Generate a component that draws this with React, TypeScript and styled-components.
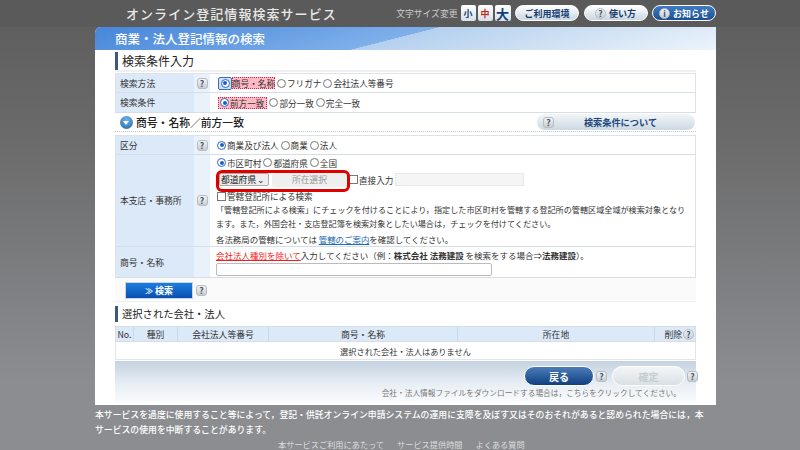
import React from "react";
import styled, { createGlobalStyle } from "styled-components";

const Global = createGlobalStyle`
  html, body { margin: 0; padding: 0; width: 800px; height: 450px; overflow: hidden; }
  body {
    background: linear-gradient(180deg, #5c5c5c 0%, #6a6a6a 30%, #8b8d91 85%, #8b8d91 100%);
    font-family: "Noto Sans CJK JP", "Liberation Sans", sans-serif;
    font-size: 9px;
    color: #333;
  }
  * { box-sizing: border-box; }
`;

const Page = styled.div`
  width: 800px; height: 450px; overflow: hidden; display: flex; flex-direction: column;
`;
const Header = styled.header`
  height: 27px; flex: none; background: #5a5a5a; display: flex; align-items: center; padding: 0 84px 1px 126px;
`;
const SiteTitle = styled.div`
  font-size: 13px; letter-spacing: 1.05px; color: #e8e8e8; font-weight: 500; white-space: nowrap; width: 270px;
`;
const HeaderRight = styled.div`
  margin-left: auto; display: flex; align-items: center; gap: 4.5px;
`;
const SizeLabel = styled.span`
  font-size: 8.8px; color: #ccc; white-space: nowrap; margin-right: -1.5px;
`;
const SizeGroup = styled.div`display: flex; gap: 2px;`;
const SizeBtn = styled.div<{ $red?: boolean; $big?: boolean }>`
  width: ${p => (p.$big ? 16 : 15)}px; height: 16px; background: linear-gradient(#fff, #d5e0ea); border-radius: 2px;
  display: flex; align-items: center; justify-content: center; font-weight: 700; line-height: 1;
  font-size: ${p => (p.$big ? 13 : 9)}px; color: ${p => (p.$red ? "#cc2211" : "#123f75")};
`;
const PillBtn = styled.div<{ $blue?: boolean }>`
  width: 64px; height: 16px; border-radius: 8px; display: flex; align-items: center; justify-content: center;
  gap: 3px; font-size: 9px; font-weight: 700; white-space: nowrap;
  background: ${p => (p.$blue ? "linear-gradient(#3f7cc4, #1b4f92)" : "linear-gradient(#fff, #c9d6e2)")};
  color: ${p => (p.$blue ? "#fff" : "#163c6e")};
  border: 1px solid #fff;
`;
const Main = styled.main`
  width: 621px; height: 378px; margin-left: 95px; background: #fff; border-radius: 6px 0 0 0;
  display: flex; flex-direction: column; flex: none;
`;
const MainTitle = styled.h1`
  margin: 0; height: 23px; border-radius: 6px 0 0 0; padding-left: 20px; display: flex; align-items: center; flex: none;
  font-size: 12.5px; font-weight: 500; color: #fff;
  background: linear-gradient(165.7deg, #4685da 0%, #7eb0ea 48.4%, #b4d0ee 48.6%, #edf4fb 100%);
`;
const Content = styled.div`
  padding: 0 20px; display: flex; flex-direction: column;
`;
const SectionHead = styled.h2<{ $top: number; $h: number; $size: number }>`
  margin: ${p => p.$top}px 0 0; height: ${p => p.$h}px; border-left: 3px solid #3f5a78; padding-left: 4px;
  display: flex; align-items: center; font-size: ${p => p.$size}px; font-weight: 400; color: #222; line-height: 1;
`;
const Divider = styled.div`height: 2px; background: #eef0f1; margin-bottom: 1px;`;
const Rows = styled.div`border: 1px solid #dde3e8; border-width: 1px 1px 0 1px; display: flex; flex-direction: column;`;
const Row = styled.div<{ $h: number }>`
  height: ${p => p.$h}px; display: flex; border-bottom: 1px solid #d5dde5;
`;
const Label = styled.div`
  width: 78px; flex: none; background: #dce9f8; display: flex; align-items: center; padding-left: 4px;
  font-size: 8.8px; color: #333;
`;
const HelpCell = styled.div`
  width: 16px; flex: none; background: #e9f1fb; display: flex; align-items: center; justify-content: center;
`;
const Help = styled.span`
  width: 11px; height: 11px; flex: none; border-radius: 3px; background: linear-gradient(#f4f4f4, #c8ccd0);
  border: 1px solid #b6bcc2; color: #3b556f; font-size: 8.5px; font-weight: 700; line-height: 1;
  display: inline-flex; align-items: center; justify-content: center;
`;
const RoundHelp = styled(Help)`border-radius: 50%;`;
const Field = styled.div`
  flex: 1; min-width: 0; padding: 0 0 0 5px; display: flex; flex-direction: column; justify-content: center;
`;
const Line = styled.div<{ $h?: number; $pad?: number }>`
  display: flex; align-items: center; height: ${p => p.$h ?? 14}px; white-space: nowrap; font-size: 8.6px; color: #333;
  padding-left: ${p => p.$pad ?? 0}px;
`;
const Radio = styled.span<{ $on?: boolean }>`
  width: 9px; height: 9px; flex: none; border-radius: 50%; margin: 0 1px 0 2px;
  border: 1px solid ${p => (p.$on ? "#2a69c8" : "#777")}; background: #fff; position: relative;
  &::after {
    content: ""; display: ${p => (p.$on ? "block" : "none")}; position: absolute; inset: 1.5px;
    border-radius: 50%; background: #1f5fc4;
  }
`;
const Focus = styled.span`
  display: inline-flex; border: 1.5px solid #3a6fc0; border-radius: 2px; background: #cfe0f6; height: 13px; width: 14px; align-items: center;
  justify-content: center;
  & > span { margin: 0; }
`;
const Marked = styled.span<{ $right: number }>`
  background: #ffb9c4; outline: 1px dotted #e02040; outline-offset: -1px; height: 12px; display: inline-flex; align-items: center;
  padding: 0 ${p => p.$right}px 0 0;
`;
const SubHeadRow = styled.div`
  height: 19px; display: flex; align-items: center; border-bottom: 1px dotted #c5c8cb; padding-left: 5px; margin-bottom: 3px;
`;
const SubIcon = styled.span`
  width: 13px; height: 13px; border-radius: 50%; background: radial-gradient(circle at 50% 30%, #6fb2e6, #1f68a8);
  position: relative; flex: none; margin-right: 3px;
  &::after {
    content: ""; position: absolute; left: 3px; top: 5px; border: 3.5px solid transparent; border-top: 4px solid #fff; border-bottom: 0;
  }
`;
const SubTitle = styled.span`font-size: 10.8px; font-weight: 500; color: #222;`;
const AboutBtn = styled.div`
  margin-left: auto; width: 158px; height: 16px; margin-right: 1px; border-radius: 8px; background: linear-gradient(#f3f6f8, #ccd8e2);
  display: flex; align-items: center; padding-left: 6px; font-size: 9.2px; font-weight: 700; color: #1d4a7c;
`;
const AboutText = styled.span`flex: 1; text-align: center; padding-right: 8px;`;
const Attention = styled.div`
  display: flex; align-items: center; position: relative; width: 134px; height: 19px; padding-left: 4px; flex: none;
`;
const RedRing = styled.span`
  position: absolute; left: 1px; top: 0; width: 134px; height: 22px; border: 3px solid #e00000; border-radius: 6px; pointer-events: none;
`;
const SelectBox = styled.div`
  width: 50px; height: 13px; background: #eee; border: 1px solid #aaa; border-radius: 2px; font-size: 8.8px; color: #222;
  display: flex; align-items: center; justify-content: space-between; padding: 0 3px 0 1px; flex: none;
`;
const GhostBtn = styled.div`
  width: 75px; height: 14px; background: #efefef; color: #999; font-size: 8.8px; display: flex; align-items: center; justify-content: center; border-radius: 2px; margin-left: 3px; flex: none;
`;
const Check = styled.span<{ $left: number }>`width: 9px; height: 9px; border: 1px solid #777; background: #fff; flex: none; margin: 0 1px 0 ${p => p.$left}px;`;
const DirectInput = styled.div`width: 129px; height: 13px; background: #f5f5f5; border: 1px solid #e8e8e8; margin-left: 2px;`;
const Note = styled.div<{ $size: number }>`font-size: ${p => p.$size}px; line-height: 14.2px; color: #333; white-space: nowrap; margin-left: 1px;`;
const Link = styled.span`color: #1c6db5; text-decoration: underline;`;
const RedLink = styled.span`color: #f02020; text-decoration: underline;`;
const TextField = styled.div`width: 276px; height: 13px; border: 1px solid #bbb; border-radius: 2px; background: #fff; margin: 1px 0 0 1px;`;
const SearchRow = styled.div`
  height: 22px; background: #fafafa; display: flex; align-items: center; padding: 3px 0 0 10px; gap: 2px;
`;
const SearchBtn = styled.div`
  width: 68px; height: 17px; background: linear-gradient(#1d7ee0, #0a4fae); color: #fff; font-size: 9px; font-weight: 700;
  display: flex; align-items: center; justify-content: center; gap: 3px; border: 1px solid #c8d6e4; margin-right: 1px;
`;
const Rule = styled.div`height: 1px; background: #eef0f1; margin-top: 1px;`;
const TableHead = styled.div`
  display: grid; grid-template-columns: 18px 44px 91px 189px 197px 1fr; height: 16px; background: #dce9f8; border: 1px solid #d5dde5;
  margin-top: 4px;
`;
const Th = styled.div<{ $line?: boolean; $end?: boolean }>`
  display: flex; align-items: center; justify-content: ${p => (p.$end ? "flex-end" : "center")}; font-size: 8.8px; color: #333; white-space: nowrap; gap: 1px;
  padding-right: ${p => (p.$end ? 1 : 0)}px;
  border-right: ${p => (p.$line ? "1px solid #c8d8ea" : "none")};
`;
const EmptyRow = styled.div`
  height: 18px; border: 1px solid #e3e6e9; border-top: 0; display: flex; align-items: center; justify-content: center; font-size: 8.2px; color: #333;
`;
const ActionBar = styled.div`
  height: 42px; margin: 1px 0 0; background: linear-gradient(#c4d2e0, #e8eef5 55%, #fafcfd); display: flex; flex-direction: column; align-items: flex-end; padding: 5px 0 0;
`;
const ActionRow = styled.div`display: flex; align-items: center; height: 20px; gap: 2px; margin-right: -2px;`;
const BackBtn = styled.div`
  width: 70px; height: 20px; border-radius: 10px; background: linear-gradient(#4c7db8, #113f80); border: 1px solid #fff; color: #fff; font-size: 10px; font-weight: 700;
  display: flex; align-items: center; justify-content: center;
`;
const ConfirmBtn = styled(BackBtn)`
  width: 73px; background: linear-gradient(#f4f6f7, #d8e0e6); color: #c5cdd2; margin-left: 3px;
`;
const DownloadNote = styled.div`font-size: 7.7px; line-height: 14px; color: #777; padding-right: 15px; white-space: nowrap;`;
const Footer = styled.footer`
  padding: 2px 0 0 95px; width: 720px; color: #fff; font-size: 8.85px; line-height: 15px; flex: none;
`;
const FooterNote = styled.p`margin: 0; font-weight: 500; width: 615px;`;
const FooterLinks = styled.nav`
  display: flex; gap: 13px; font-size: 8.2px; line-height: 11px; color: #ddd; margin: 2px 0 0 183px; white-space: nowrap;
`;
const Chevron = styled.span`font-size: 8px; letter-spacing: -1px;`;

const Q = () => <Help>?</Help>;

export default function App() {
  return (
    <>
      <Global />
      <Page>
        <Header>
          <SiteTitle>オンライン登記情報検索サービス</SiteTitle>
          <HeaderRight>
            <SizeLabel>文字サイズ変更</SizeLabel>
            <SizeGroup>
              <SizeBtn>小</SizeBtn>
              <SizeBtn $red>中</SizeBtn>
              <SizeBtn $big>大</SizeBtn>
            </SizeGroup>
            <PillBtn>ご利用環境</PillBtn>
            <PillBtn><RoundHelp>?</RoundHelp>使い方</PillBtn>
            <PillBtn $blue><RoundHelp>i</RoundHelp>お知らせ</PillBtn>
          </HeaderRight>
        </Header>
        <Main>
          <MainTitle>商業・法人登記情報の検索</MainTitle>
          <Content>
            <SectionHead $top={2} $h={18} $size={12}>検索条件入力</SectionHead>
            <Divider />
            <Rows>
              <Row $h={19}>
                <Label>検索方法</Label>
                <HelpCell><Q /></HelpCell>
                <Field>
                  <Line $pad={3}>
                    <Focus><Radio $on /></Focus><Marked $right={0}>商号・名称</Marked>
                    <Radio />フリガナ<Radio />会社法人等番号
                  </Line>
                </Field>
              </Row>
              <Row $h={20}>
                <Label>検索条件</Label>
                <HelpCell />
                <Field>
                  <Line $pad={3}>
                    <Marked $right={3}><Radio $on />前方一致</Marked>
                    <Radio />部分一致<Radio />完全一致
                  </Line>
                </Field>
              </Row>
            </Rows>
            <SubHeadRow>
              <SubIcon />
              <SubTitle>商号・名称／前方一致</SubTitle>
              <AboutBtn><Q /><AboutText>検索条件について</AboutText></AboutBtn>
            </SubHeadRow>
            <Rows>
              <Row $h={19}>
                <Label>区分</Label>
                <HelpCell><Q /></HelpCell>
                <Field>
                  <Line><Radio $on />商業及び法人<Radio />商業<Radio />法人</Line>
                </Field>
              </Row>
              <Row $h={92}>
                <Label>本支店・事務所</Label>
                <HelpCell><Q /></HelpCell>
                <Field>
                  <Line $h={15}><Radio $on />市区町村<Radio />都道府県<Radio />全国</Line>
                  <Line $h={19}>
                    <Attention>
                      <SelectBox>都道府県<span>⌄</span></SelectBox>
                      <GhostBtn>所在選択</GhostBtn>
                      <RedRing />
                    </Attention>
                    <Check $left={0} />直接入力<DirectInput />
                  </Line>
                  <Line><Check $left={2} />管轄登記所による検索</Line>
                  <Note $size={8.12}>
                    「管轄登記所による検索」にチェックを付けることにより，指定した市区町村を管轄する登記所の管轄区域全域が検索対象となり<br />
                    ます。また，外国会社・支店登記簿を検索対象としたい場合は，チェックを付けてください。
                  </Note>
                  <Note $size={8.45}>各法務局の管轄については <Link>管轄のご案内</Link>を確認してください。</Note>
                </Field>
              </Row>
              <Row $h={31}>
                <Label>商号・名称</Label>
                <HelpCell />
                <Field>
                  <Line>
                    <Note $size={8.5}><RedLink>会社法人種別を除いて</RedLink>入力してください（例：<b>株式会社 法務建設</b> を検索をする場合⇒<b>法務建設</b>）。</Note>
                  </Line>
                  <TextField />
                </Field>
              </Row>
            </Rows>
            <SearchRow>
              <SearchBtn><Chevron>≫</Chevron>検索</SearchBtn>
              <Q />
            </SearchRow>
            <Rule />
          </Content>
          <Content>
            <SectionHead $top={4} $h={16} $size={10.3}>選択された会社・法人</SectionHead>
            <TableHead>
              <Th $line>No.</Th>
              <Th $line>種別</Th>
              <Th $line>会社法人等番号</Th>
              <Th $line>商号・名称</Th>
              <Th $line>所在地</Th>
              <Th $end>削除<RoundHelp>?</RoundHelp></Th>
            </TableHead>
            <EmptyRow>選択された会社・法人はありません</EmptyRow>
            <ActionBar>
              <ActionRow>
                <BackBtn>戻る</BackBtn><Q />
                <ConfirmBtn>確定</ConfirmBtn><Q />
              </ActionRow>
              <DownloadNote>会社・法人情報ファイルをダウンロードする場合は，こちらをクリックしてください。</DownloadNote>
            </ActionBar>
          </Content>
        </Main>
        <Footer>
          <FooterNote>
            本サービスを過度に使用すること等によって，登記・供託オンライン申請システムの運用に支障を及ぼす又はそのおそれがあると認められた場合には，本サービスの使用を中断することがあります。
          </FooterNote>
          <FooterLinks>
            <span>本サービスご利用にあたって</span>
            <span>サービス提供時間</span>
            <span>よくある質問</span>
          </FooterLinks>
        </Footer>
      </Page>
    </>
  );
}
